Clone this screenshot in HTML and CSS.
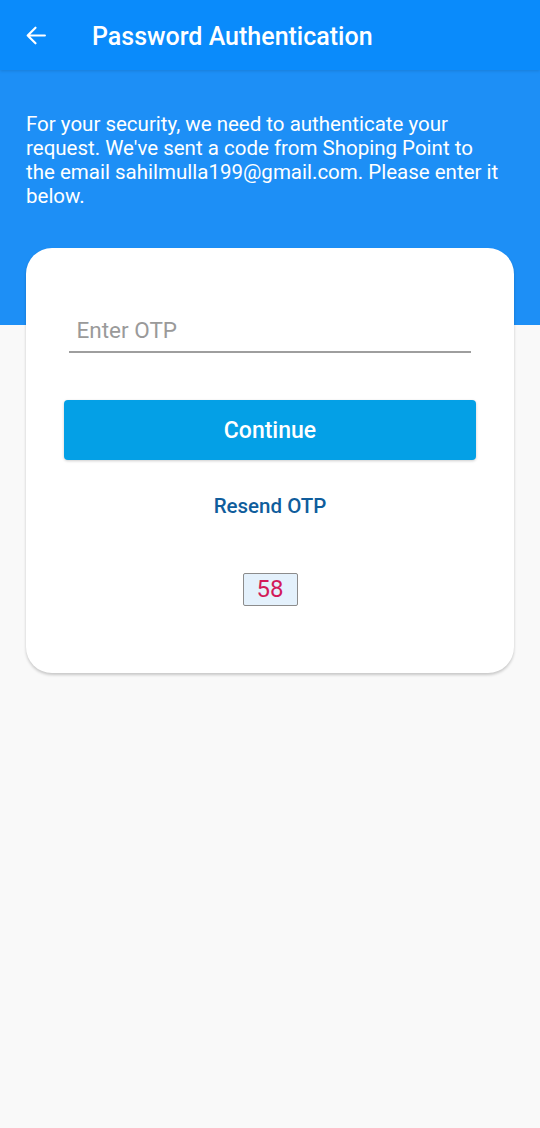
FILE: index.html
```html
<!DOCTYPE html>
<html>
<head>
<meta charset="utf-8">
<link rel="stylesheet" href="styles.css">
</head>
<body>
<div class="page">
  <header class="appbar">
    <svg class="back" width="24" height="24" viewBox="0 0 24 24"><path d="M21 12H4.5M12 4.5L4.5 12 12 19.5" fill="none" stroke="#fff" stroke-width="2.1" stroke-linecap="round" stroke-linejoin="round"/></svg>
    <h1 class="title">Password Authentication</h1>
  </header>
  <section class="hero">
    <p class="intro">For your security, we need to authenticate your request. We've sent a code from Shoping Point to the email sahilmulla199@gmail.com. Please enter it below.</p>
  </section>
  <main class="content">
    <div class="card">
      <div class="field"><span class="placeholder">Enter OTP</span></div>
      <button class="continue">Continue</button>
      <div class="resend">Resend OTP</div>
      <div class="timer-wrap"><span class="timer">58</span></div>
    </div>
  </main>
</div>
</body>
</html>
```

FILE: styles.css
```css
html, body {
  margin: 0;
  padding: 0;
}
body {
  font-family: Roboto, "Noto Sans", sans-serif;
  background: #f9f9f9;
  width: 540px;
  height: 1128px;
  overflow: hidden;
}
.page {
  position: relative;
}
.appbar {
  height: 70px;
  background: #0a8bfb;
  display: flex;
  align-items: center;
  position: relative;
  z-index: 2;
  box-shadow: 0 1px 3px rgba(0,0,0,0.12);
}
.back {
  width: 25px;
  height: 25px;
  margin-left: 23px;
  margin-top: 1px;
}
.title {
  margin: 2px 0 0 44px;
  color: #fff;
  font-size: 25px;
  font-weight: 500;
}
.hero {
  background: #1d8ff6;
  height: 255px;
  padding: 0;
}
.intro {
  margin: 0;
  padding: 42px 38px 0 26px;
  color: #fff;
  font-size: 20.5px;
  line-height: 24px;
}
.content {
  margin-top: -77px;
  padding: 0 26px;
}
.card {
  background: #fff;
  border-radius: 26px;
  height: 425px;
  box-shadow: 0 2px 3px rgba(0,0,0,0.2);
  padding: 0 38px;
  display: flex;
  flex-direction: column;
  align-items: center;
}
.field {
  margin-top: 66px;
  width: 402px;
  margin-left: -1px;
  border-bottom: 2px solid #9e9e9e;
  height: 39px;
  box-sizing: border-box;
  padding-left: 8px;
}
.placeholder {
  color: #9a9a9a;
  font-size: 22.5px;
  line-height: 32px;
  display: block;
}
.continue {
  margin-top: 47px;
  width: 412px;
  height: 60px;
  border: 0;
  border-radius: 4px;
  background: #04a0e6;
  color: #fff;
  font-family: Roboto, sans-serif;
  font-size: 23px;
  font-weight: 500;
  padding-top: 2px;
  box-shadow: 0 1px 3px rgba(0,0,0,0.2);
}
.resend {
  margin-top: 34px;
  color: #0f5d9c;
  font-size: 20.5px;
  font-weight: 500;
}
.timer-wrap {
  margin-top: 55px;
}
.timer {
  display: inline-block;
  width: 55px;
  height: 33px;
  box-sizing: border-box;
  border: 1px solid #8c8c8c;
  border-radius: 2px;
  background: #e4f1fc;
  color: #d21a5a;
  font-size: 24px;
  line-height: 31px;
  text-align: center;
}
```
